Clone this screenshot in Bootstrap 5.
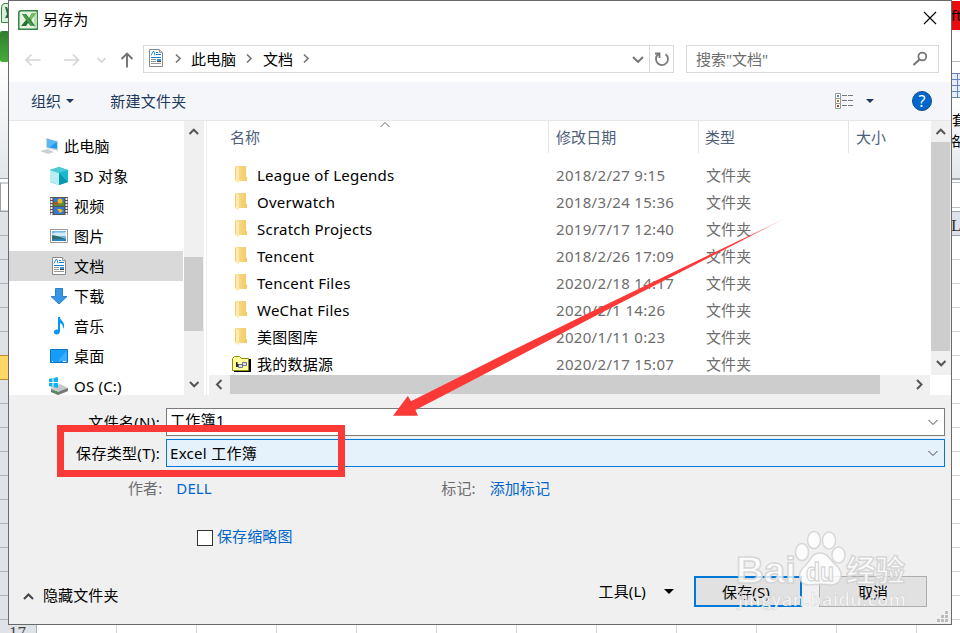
<!DOCTYPE html>
<html lang="zh-CN">
<head>
<meta charset="utf-8">
<meta name="viewport" content="width=device-width, initial-scale=1">
<title>另存为</title>
<link rel="stylesheet" href="https://cdn.jsdelivr.net/npm/bootstrap@5.3.0/dist/css/bootstrap.min.css">
<style>
body{width:960px;height:633px;font:15px/20px "Noto Sans","Noto Sans CJK SC",sans-serif;letter-spacing:.12px;color:#000;background:#fff}
svg{display:block;flex:none}
.sheet{left:0;top:0}
.dialog{left:8px;top:0;width:944px;height:625px;border:1px solid #696969;background:#fff}
.titlebar{height:38px;padding-left:9px;padding-right:14px}
.titlebar span{margin:0 0 2px 5px}
.addrbar{height:43px;padding:6px 12px 9px 15px;letter-spacing:0}
.field{border:1px solid #d9d9d9;height:28px}
.field span{margin-bottom:1px}
.tools{height:39px;background:#f4f6f9;color:#1e395b;padding:0 19px 0 22px;border-bottom:1px solid #e5e7ea}
.main{height:274px}
.tree{width:175px;padding-top:10px}
.node{height:30px;width:174px;padding-left:40px;flex:none}
.node:first-child{padding-left:31px}
.node.on{background:#d9d9d9}
.node svg{width:20px;height:20px}
.node span{margin-left:5px;letter-spacing:.2px}
.node:first-child span{margin-left:4px}
.vbar{width:20px;background:#f0f0f0;flex:none}
.thumb{background:#cdcdcd}
.files{margin-left:2px;border-left:1px solid #f0f0f0}
.list{height:254px}
.heads{height:32px;color:#4c607a}
.heads div{border-right:1px solid #e5e5e5;height:32px;line-height:32px}
.c1{width:342px;padding-left:23px}.c2{width:150px;padding-left:7px}.c3{width:150px;padding-left:6px}.c4{padding-left:7px}
.rows{padding-top:8px;height:222px}
.filerow{height:27px;color:#6d6d6d;flex:none}
.filerow .c1{color:#000;padding-left:24px}
.filerow .c2{padding-left:7px;letter-spacing:.32px}.filerow .c3{padding-left:7px}
.filerow .c1 span{margin-left:6px;letter-spacing:.24px}
.hbar{height:20px;background:#f0f0f0;margin-left:2px}
.foot{height:229px;background:#f0f0f0;padding-top:13px}
.lab{width:151px;text-align:right;margin-right:6px;letter-spacing:.32px}
.combo{height:28px;width:779px;border:1px solid #7a7a7a;background:#fff;padding:0 5px 0 3px}
.combo span{letter-spacing:.3px}
.combo.hot{border-color:#0078d7;background:#e5f1fb}
.blue{color:#0066cc}
.gray{color:#6d6d6d}
.box16{width:16px;height:16px;border:1px solid #333;background:#fff}
.meta{height:41px;letter-spacing:.1px}
.act{height:31px;width:108px;border:1px solid #adadad;background:#e1e1e1}
.act.def{border:2px solid #0078d7}
.endrow{margin-top:30px;height:31px}
.marks{left:0;top:0;pointer-events:none}
</style>
<script src="https://cdn.jsdelivr.net/npm/bootstrap@5.3.0/dist/js/bootstrap.bundle.min.js"></script>
</head>
<body class="position-relative overflow-hidden m-0">
<svg class="sheet position-absolute" width="960" height="633">
<defs>
<linearGradient id="rb" x2="0" y2="1"><stop offset="0" stop-color="#fff"/><stop offset="1" stop-color="#e3e6ea"/></linearGradient>
<linearGradient id="gr" x2="0" y2="1"><stop offset="0" stop-color="#2f7d2f"/><stop offset="1" stop-color="#46ad38"/></linearGradient>
</defs>
<rect y="62" width="9" height="116" fill="url(#rb)"/><rect x="951" y="100" width="9" height="78" fill="url(#rb)"/>
<path d="M9 3.500H4Q1.500 4 1.500 8V22.500H9" fill="#dcefdc" stroke="#3c8a3e"/><path d="M5 7h2l2 5v6H5l2-4z" fill="#246b31"/>
<rect y="31" width="9" height="31" rx="2" fill="url(#gr)"/>
<path d="M0 178.500H9M0 211.500H9" stroke="#9ba0a6"/><rect x=".5" y="183" width="9" height="28" fill="#fff" stroke="#9b9fa7"/>
<rect y="212" width="9" height="421" fill="#dfe3e8"/>
<path d="M0 235.500H9M0 259.500H9M0 283.500H9M0 307.500H9M0 331.500H9M0 403.500H9M0 427.500H9M0 451.500H9M0 475.500H9M0 499.500H9M0 523.500H9M0 547.500H9M0 571.500H9M0 595.500H9M0 619.500H9" stroke="#abb1b9"/>
<rect y="355" width="9" height="25" fill="#ffd766"/><path d="M0 355.500H9M0 379.500H9" stroke="#c28a30"/>
<rect x="0" y="625" width="36" height="8" fill="#dfe3e8"/><path d="M36.500 625v8" stroke="#abb1b9"/>
<text x="9" y="638" font-family="Liberation Serif,serif" font-size="17" fill="#444">17</text>
<path d="M116.500 625v8M196.500 625v8M276.500 625v8M356.500 625v8M436.500 625v8M516.500 625v8M596.500 625v8M676.500 625v8M756.500 625v8M836.500 625v8M916.500 625v8" stroke="#d4d5d9"/>
<rect x="951" y="1" width="9" height="29" fill="#e60e0e"/><text x="951" y="21" font-family="Noto Sans,sans-serif" font-size="15">ft</text>
<path d="M951 61.500h9" stroke="#bbb"/><rect x="951" y="73" width="9" height="24" fill="#e5edfa"/><path d="M951 73.500h9M951 79.500h9M951 85.500h9M951 91.500h9M951 97.500h9M957.500 73v24" stroke="#6684b6"/>
<text x="952" y="125" font-family="Noto Sans CJK SC,sans-serif" font-size="14">套</text><text x="947" y="146" font-family="Noto Sans CJK SC,sans-serif" font-size="14">格</text>
<path d="M951 179h9" stroke="#a4a9b0" stroke-width="2"/><path d="M951 182.500h9M951 207.500h9" stroke="#bcc0c8"/><rect x="951" y="211" width="9" height="25" fill="#dfe2ea"/><path d="M951 211.500h9M951 235.500h9" stroke="#9b9fa7"/><text x="951" y="231" font-family="Liberation Serif,serif" font-size="17" fill="#333">L</text>
<path d="M951 259.500h9M951 283.500h9M951 307.500h9M951 331.500h9M951 355.500h9M951 379.500h9M951 403.500h9M951 427.500h9M951 451.500h9M951 475.500h9M951 499.500h9M951 523.500h9M951 547.500h9M951 571.500h9M951 595.500h9M951 619.500h9" stroke="#d4d5d9"/>
<symbol id="doc" viewBox="0 0 20 20"><path d="M3.500 1.500h10l3 3v14h-13z" fill="#fff" stroke="#888"/><path d="M13.500 1.500v3h3" fill="#ddd" stroke="#999"/><path d="M5 7.500l2-4h1l1 4" stroke="#1580d8" fill="none" stroke-width=".9"/><path d="M10 4.500h2M10 6.500h5M5 9.500h10" stroke="#1580d8" fill="none"/><path d="M5 11.500h5M5 13.500h5M5 15.500h10" stroke="#999"/><path d="M11 11h4v2h-4z" fill="#3b94d5"/><path d="M11 13h4v1h-4z" fill="#444"/></symbol>
<linearGradient id="fg" x2="1"><stop offset="0" stop-color="#fbe19a"/><stop offset="1" stop-color="#f0cb62"/></linearGradient>
<symbol id="folder" viewBox="0 0 20 20"><path d="M4 1h11v11h1v4H6z" fill="url(#fg)"/><path d="M4 1l4 2v14l-1 1-3-2z" fill="#ffe9ad"/><path d="M4.500 2v13" stroke="#f1ce73"/></symbol>
<symbol id="up" viewBox="0 0 20 20"><path d="M5.500 13l4.300-4.300 4.300 4.300" fill="none" stroke="#555" stroke-width="2"/></symbol>
</svg>

<div class="dialog position-absolute d-flex flex-column">
<header class="titlebar d-flex align-items-center">
<svg width="20" height="20"><path d="M3 .8H19.200V19.200H.8V3Q.8.8 3 .8z" fill="#e5f3e4" stroke="#358342" stroke-width="1.500"/><path d="M16 3h3v15h-3z" fill="#b9dfb5"/><path d="M4 4h4l3 4 3-5h4l-5 7 4 6h-4l-3-3-2 3H3l5-6z" fill="#267236"/><path d="M14 3h4l-5 7-2-2z" fill="#77bd5d"/><path d="M4 4h3l9 12h-3z" fill="#4b9e45"/></svg>
<span>另存为</span>
<svg class="ms-auto mb-1" width="14" height="14"><path d="M1 1l12 12M13 1L1 13" stroke="#000" stroke-width="1.200"/></svg>
</header>
<div class="addrbar d-flex">
<svg width="119" height="28"><g fill="none" stroke="#d5d5d5" stroke-width="1.700"><path d="M16.500 15H2M7.500 9.500L2 15l5.500 5.500M40 15h14.500M49 9.500l5.500 5.500-5.500 5.500"/><path d="M73.500 13l4 4 4-4"/><path d="M103 22.500V9M97.500 14l5.500-5.500 5.500 5.500" stroke="#727272" stroke-width="1.900"/></g></svg>
<div class="field d-flex align-items-center" style="width:507px">
<svg width="22" height="20"><use href="#doc" x="2" y="-1" width="20" height="20"/></svg>
<svg width="25" height="20"><path d="M10 5.500l4 4-4 4" fill="none" stroke="#777" stroke-width="1.700"/></svg><span>此电脑</span>
<svg width="27" height="20"><path d="M11 5.500l4 4-4 4" fill="none" stroke="#777" stroke-width="1.700"/></svg><span>文档</span>
<svg width="27" height="20"><path d="M11 5.500l4 4-4 4" fill="none" stroke="#777" stroke-width="1.700"/></svg>
<svg class="ms-auto me-1" width="14" height="20"><path d="M2 8l5 5 5-5" fill="none" stroke="#727272" stroke-width="1.900"/></svg>
</div>
<div class="field border-start-0 d-flex align-items-center justify-content-center" style="width:24px"><svg width="18" height="18"><path d="M12.500 4.200A6 6 0 1 1 5.300 4.300M2 3.500h4.500V8" fill="none" stroke="#777" stroke-width="1.800"/></svg></div>
<div class="field d-flex align-items-center ms-auto gray" style="width:253px;padding:0 10px 0 9px"><span>搜索"文档"</span>
<svg class="ms-auto" width="16" height="16"><circle cx="10.300" cy="5.500" r="3.900" fill="none" stroke="#777" stroke-width="1.800"/><path d="M7.500 8.500L1.500 14" stroke="#777" stroke-width="2.200"/></svg></div>
</div>
<div class="tools d-flex align-items-center">
<span>组织</span><svg class="ms-1" width="10" height="8"><path d="M1 2h8L5 6z" fill="#1e395b"/></svg><span style="margin-left:35px;letter-spacing:.25px">新建文件夹</span>
<svg class="ms-auto" width="20" height="18"><g fill="#fff" stroke="#999"><path d="M1.500 1.500h5v5h-5zM1.500 6.500h5v5h-5zM1.500 11.500h5v5h-5z"/></g><path d="M3 3h2v2H3z" fill="#448da8"/><path d="M3 8h2v2H3z" fill="#a98030"/><path d="M3 13h2v2H3z" fill="#b33b20"/><path d="M8 3.500h5M14 3.500h5M8 8.500h5M14 8.500h5M8 13.500h5M14 13.500h5" stroke="#777"/></svg>
<svg style="margin-left:11px" width="10" height="8"><path d="M1 2h8L5 6z" fill="#1e395b"/></svg>
<svg style="margin-left:37px" width="20" height="20"><circle cx="10" cy="10" r="9.500" fill="#0067ce" stroke="#174a80"/><text x="10" y="15.500" text-anchor="middle" font-size="16" fill="#fff">?</text></svg>
</div>
<div class="main d-flex overflow-hidden">
<div class="tree d-flex flex-column overflow-hidden">
<div class="node d-flex align-items-center"><svg viewBox="0 0 20 20"><path d="M6 2l12 3v10L6 12z" fill="#cfd5d8"/><path d="M7 3l10 3v7L7 11z" fill="#1a9af0"/><path d="M7 3l10 3-8 5.500L7 11z" fill="#54b9f6"/><path d="M0 15l8-2 6 3-6 2z" fill="#cbd1d4"/></svg><span>此电脑</span></div>
<div class="node d-flex align-items-center"><svg viewBox="0 0 20 20"><path d="M10 1l9 3v12l-9 3-9-3V4z" fill="#25adc4"/><path d="M1 4l9 3v12l-9-3z" fill="#b7eff1"/><path d="M1 4l9-3 9 3-9 3z" fill="#49cad6"/><path d="M10 7l9-3v12z" fill="#17b9d0"/><path d="M10 7l9 9-9 3z" fill="#0798b0"/></svg><span>3D 对象</span></div>
<div class="node d-flex align-items-center"><svg viewBox="0 0 20 20"><path d="M1 1h18v18H1z" fill="#555"/><path d="M2.500 2v17M17.500 2v17" stroke="#eee" stroke-width="2" stroke-dasharray="2 1"/><path d="M5 2h10v8H5zM5 11h10v7H5z" fill="#3777d1"/><path d="M5 6h10v4H5z" fill="#598e38"/><circle cx="11" cy="5" r="2.500" fill="#efb91d"/><path d="M6 6h3v3H6z" fill="#c34f2d"/><path d="M8 13h4l2 2-3 2z" fill="#e9bd21"/></svg><span>视频</span></div>
<div class="node d-flex align-items-center"><svg viewBox="0 0 20 20"><path d="M1.500 3.500h17v13h-17z" fill="#fff" stroke="#999"/><path d="M3 5h14v10H3z" fill="#72b7e8"/><path d="M3 8c5-3 8 0 14-2v4H3z" fill="#d3edf8"/><path d="M3 9l5 1 9 3v2H3z" fill="#326e6b"/><path d="M3 13h14v2H3z" fill="#2a83b8"/></svg><span>图片</span></div>
<div class="node on d-flex align-items-center"><svg><use href="#doc" width="20" height="20"/></svg><span>文档</span></div>
<div class="node d-flex align-items-center"><svg viewBox="0 0 20 20"><path d="M6.500 2.500h7v8h4.500L10 18l-8-7.500h4.500z" fill="#3795e8" stroke="#2d7ec9"/></svg><span>下载</span></div>
<div class="node d-flex align-items-center"><svg viewBox="0 0 20 20"><path d="M9 1h2c0 4 5 4 4 10l-1 2c0-4-1-5-3-6v8c0 5-7 4-6 1 0-2 2-3 4-2z" fill="#0796f5"/></svg><span>音乐</span></div>
<div class="node d-flex align-items-center"><svg viewBox="0 0 20 20"><path d="M1.500 3.500h17v13h-17z" fill="#179cf8" stroke="#0873bf"/><path d="M18 4v11H9z" fill="#36adff"/><path d="M3 15.500h1M14 15.500h3" stroke="#fff"/></svg><span>桌面</span></div>
<div class="node d-flex align-items-center"><svg viewBox="0 0 20 20"><path d="M2 12l9-4 8 4v3l-10 4-7-3z" fill="#c5c9c9"/><path d="M2 13l7 3 10-4v3L9 19l-7-3z" fill="#777"/><path d="M5 15h3v2H5z" fill="#35a53c"/><path d="M0 3l3.500-1v4H0zM4.500 2L9 1v5H4.500zM0 7h3.500v4L0 10zM4.500 7H9v5l-4.500-1z" fill="#14b1ec"/></svg><span>OS (C:)</span></div>
</div>
<div class="vbar d-flex flex-column"><svg width="20" height="20"><use href="#up" width="20" height="20"/></svg><div class="thumb" style="margin-top:116px;height:74px;width:19px"></div><svg class="mt-auto" width="20" height="22"><use href="#up" width="20" height="20" transform="translate(0 2) rotate(180 10 10)"/></svg></div>
<div class="files flex-grow-1 d-flex flex-column">
<div class="list d-flex">
<div class="flex-grow-1 overflow-hidden">
<div class="heads d-flex"><div class="c1 d-flex">名称<svg style="margin-left:119px" width="12" height="8"><path d="M1.500 6l4.500-4.500L10.500 6" fill="none" stroke="#666"/></svg></div><div class="c2">修改日期</div><div class="c3">类型</div><div class="c4 border-0">大小</div></div>
<div class="rows overflow-hidden d-flex flex-column">
<div class="filerow d-flex align-items-center"><div class="c1 d-flex"><svg width="20" height="20"><use href="#folder"/></svg><span>League of Legends</span></div><div class="c2">2018/2/27 9:15</div><div class="c3">文件夹</div></div>
<div class="filerow d-flex align-items-center"><div class="c1 d-flex"><svg width="20" height="20"><use href="#folder"/></svg><span>Overwatch</span></div><div class="c2">2018/3/24 15:36</div><div class="c3">文件夹</div></div>
<div class="filerow d-flex align-items-center"><div class="c1 d-flex"><svg width="20" height="20"><use href="#folder"/></svg><span>Scratch Projects</span></div><div class="c2">2019/7/17 12:40</div><div class="c3">文件夹</div></div>
<div class="filerow d-flex align-items-center"><div class="c1 d-flex"><svg width="20" height="20"><use href="#folder"/></svg><span>Tencent</span></div><div class="c2">2018/2/26 17:09</div><div class="c3">文件夹</div></div>
<div class="filerow d-flex align-items-center"><div class="c1 d-flex"><svg width="20" height="20"><use href="#folder"/></svg><span>Tencent Files</span></div><div class="c2">2020/2/18 14:17</div><div class="c3">文件夹</div></div>
<div class="filerow d-flex align-items-center"><div class="c1 d-flex"><svg width="20" height="20"><use href="#folder"/></svg><span>WeChat Files</span></div><div class="c2">2020/2/1 14:26</div><div class="c3">文件夹</div></div>
<div class="filerow d-flex align-items-center"><div class="c1 d-flex"><svg width="20" height="20"><use href="#folder"/></svg><span>美图图库</span></div><div class="c2">2020/1/11 0:23</div><div class="c3">文件夹</div></div>
<div class="filerow d-flex align-items-center"><div class="c1 d-flex"><svg width="20" height="20"><path d="M3 5h17v13H3z" fill="#000"/><path d="M1.500 16.500v-12l2-2h5l2 2h7v12z" fill="#ffff9c" stroke="#8e8e00"/><path d="M5 8h1.500v2H8v3H5z" fill="#222"/><path d="M7.500 10.500h4v3h-4zM11.500 8.500h4v3h-4z" fill="#ddd" stroke="#55558c" stroke-width=".8"/></svg><span>我的数据源</span></div><div class="c2">2020/2/17 15:07</div><div class="c3">文件夹</div></div>
</div>
</div>
<div class="vbar d-flex flex-column"><svg width="20" height="20"><use href="#up" width="20" height="20"/></svg><div class="thumb flex-grow-1" style="width:19px;margin-top:1px"></div><svg width="20" height="24"><use href="#up" width="20" height="20" transform="translate(0 3) rotate(180 10 10)"/></svg></div>
</div>
<div class="d-flex"><div class="hbar d-flex" style="width:721px"><svg width="21" height="20"><path d="M12.500 5L8 9.500l4.500 4.500" fill="none" stroke="#555" stroke-width="2"/></svg><div class="thumb" style="width:650px;height:19px"></div><svg class="ms-auto" width="21" height="20"><path d="M8 5l4.500 4.500L8 14" fill="none" stroke="#555" stroke-width="2"/></svg></div></div>
</div>
</div>
<div class="foot">
<div class="d-flex align-items-center"><span class="lab">文件名(N):</span><div class="combo d-flex align-items-center"><span class="mb-1">工作簿1</span><svg class="ms-auto" width="12" height="8"><path d="M1.500 2L6 6.500 10.500 2" fill="none" stroke="#444"/></svg></div></div>
<div class="d-flex align-items-center" style="margin-top:3px"><span class="lab">保存类型(T):</span><div class="combo hot d-flex align-items-center"><span>Excel 工作簿</span><svg class="ms-auto" width="12" height="8"><path d="M1.500 2L6 6.500 10.500 2" fill="none" stroke="#444"/></svg></div></div>
<div class="meta d-flex align-items-center gray"><span style="margin-left:119px">作者:</span><span class="blue" style="width:265px;margin-left:14px">DELL</span><span>标记:</span><span class="blue" style="margin-left:14px">添加标记</span></div>
<div class="d-flex align-items-center" style="margin:18px 0 0 188px"><div class="box16 mt-1"></div><span class="blue ms-1">保存缩略图</span></div>
<div class="endrow d-flex align-items-center"><svg style="margin-left:13px;margin-top:8px" width="14" height="12"><path d="M2 9l4.500-4.500L11 9" fill="none" stroke="#444" stroke-width="2"/></svg><span style="margin:6px 0 0 7px">隐藏文件夹</span>
<span class="ms-auto" style="margin-bottom:1px">工具(L)</span><svg style="margin:0 20px 0 18px" width="10" height="8"><path d="M0 1h10L5 6z"/></svg>
<div class="act def d-flex align-items-center justify-content-center pe-1">保存(S)</div><div class="act d-flex align-items-center justify-content-center" style="margin:0 24px 0 17px">取消</div></div>
</div>
</div>
<svg class="marks position-absolute" width="960" height="633">
<g fill="#bcbcbc"><path d="M945 611h3v3h-3zM941 615h3v3h-3zM945 615h3v3h-3zM937 619h3v3h-3zM941 619h3v3h-3zM945 619h3v3h-3z"/></g>
<rect x="60.500" y="428.500" width="281" height="45" fill="none" stroke="#fb3a38" stroke-width="7"/>
<linearGradient id="tail" gradientUnits="userSpaceOnUse" x1="790" y1="218" x2="740" y2="243"><stop offset="0" stop-color="#fb3a38" stop-opacity=".2"/><stop offset="1" stop-color="#fb3a38"/></linearGradient>
<path d="M393 415.800L407.800 396L411 401.300L500 356.500L600 307.500L788 217L600 313.500L500 366L415.500 410L418 415.800z" fill="url(#tail)"/>
<g fill="#fff" fill-opacity=".8" stroke="#cfcfcf" stroke-opacity=".8" stroke-width="1.500" letter-spacing="0">
<text x="736" y="583" font-family="Liberation Sans,sans-serif" font-weight="bold" font-size="37" textLength="60" lengthAdjust="spacingAndGlyphs">Bai</text>
<ellipse cx="802" cy="552" rx="6.500" ry="8.500"/><ellipse cx="814" cy="540" rx="6.500" ry="8.500"/><ellipse cx="829" cy="540.500" rx="6.500" ry="8.500"/><ellipse cx="838.500" cy="555" rx="6.500" ry="8"/>
<path d="M820 553c-9 0-9 8-15 13-8 6-7 18 3 19 8 0 13-2 22 0 12 0 14-12 7-19-7-5-8-13-17-13z"/>
<text x="806" y="581" font-family="Liberation Sans,sans-serif" font-weight="bold" font-size="26" textLength="28" lengthAdjust="spacingAndGlyphs">du</text>
<text x="846" y="581" font-family="Noto Sans CJK SC,sans-serif" font-weight="bold" font-size="30" textLength="59">经验</text></g>
<text x="738" y="606" font-family="Open Sans,sans-serif" font-weight="600" font-size="18" fill="#fff" fill-opacity=".85" stroke="#bbb" stroke-opacity=".5" stroke-width=".7" textLength="168">jingyan.baidu.com</text>
</svg>
</body>
</html>
